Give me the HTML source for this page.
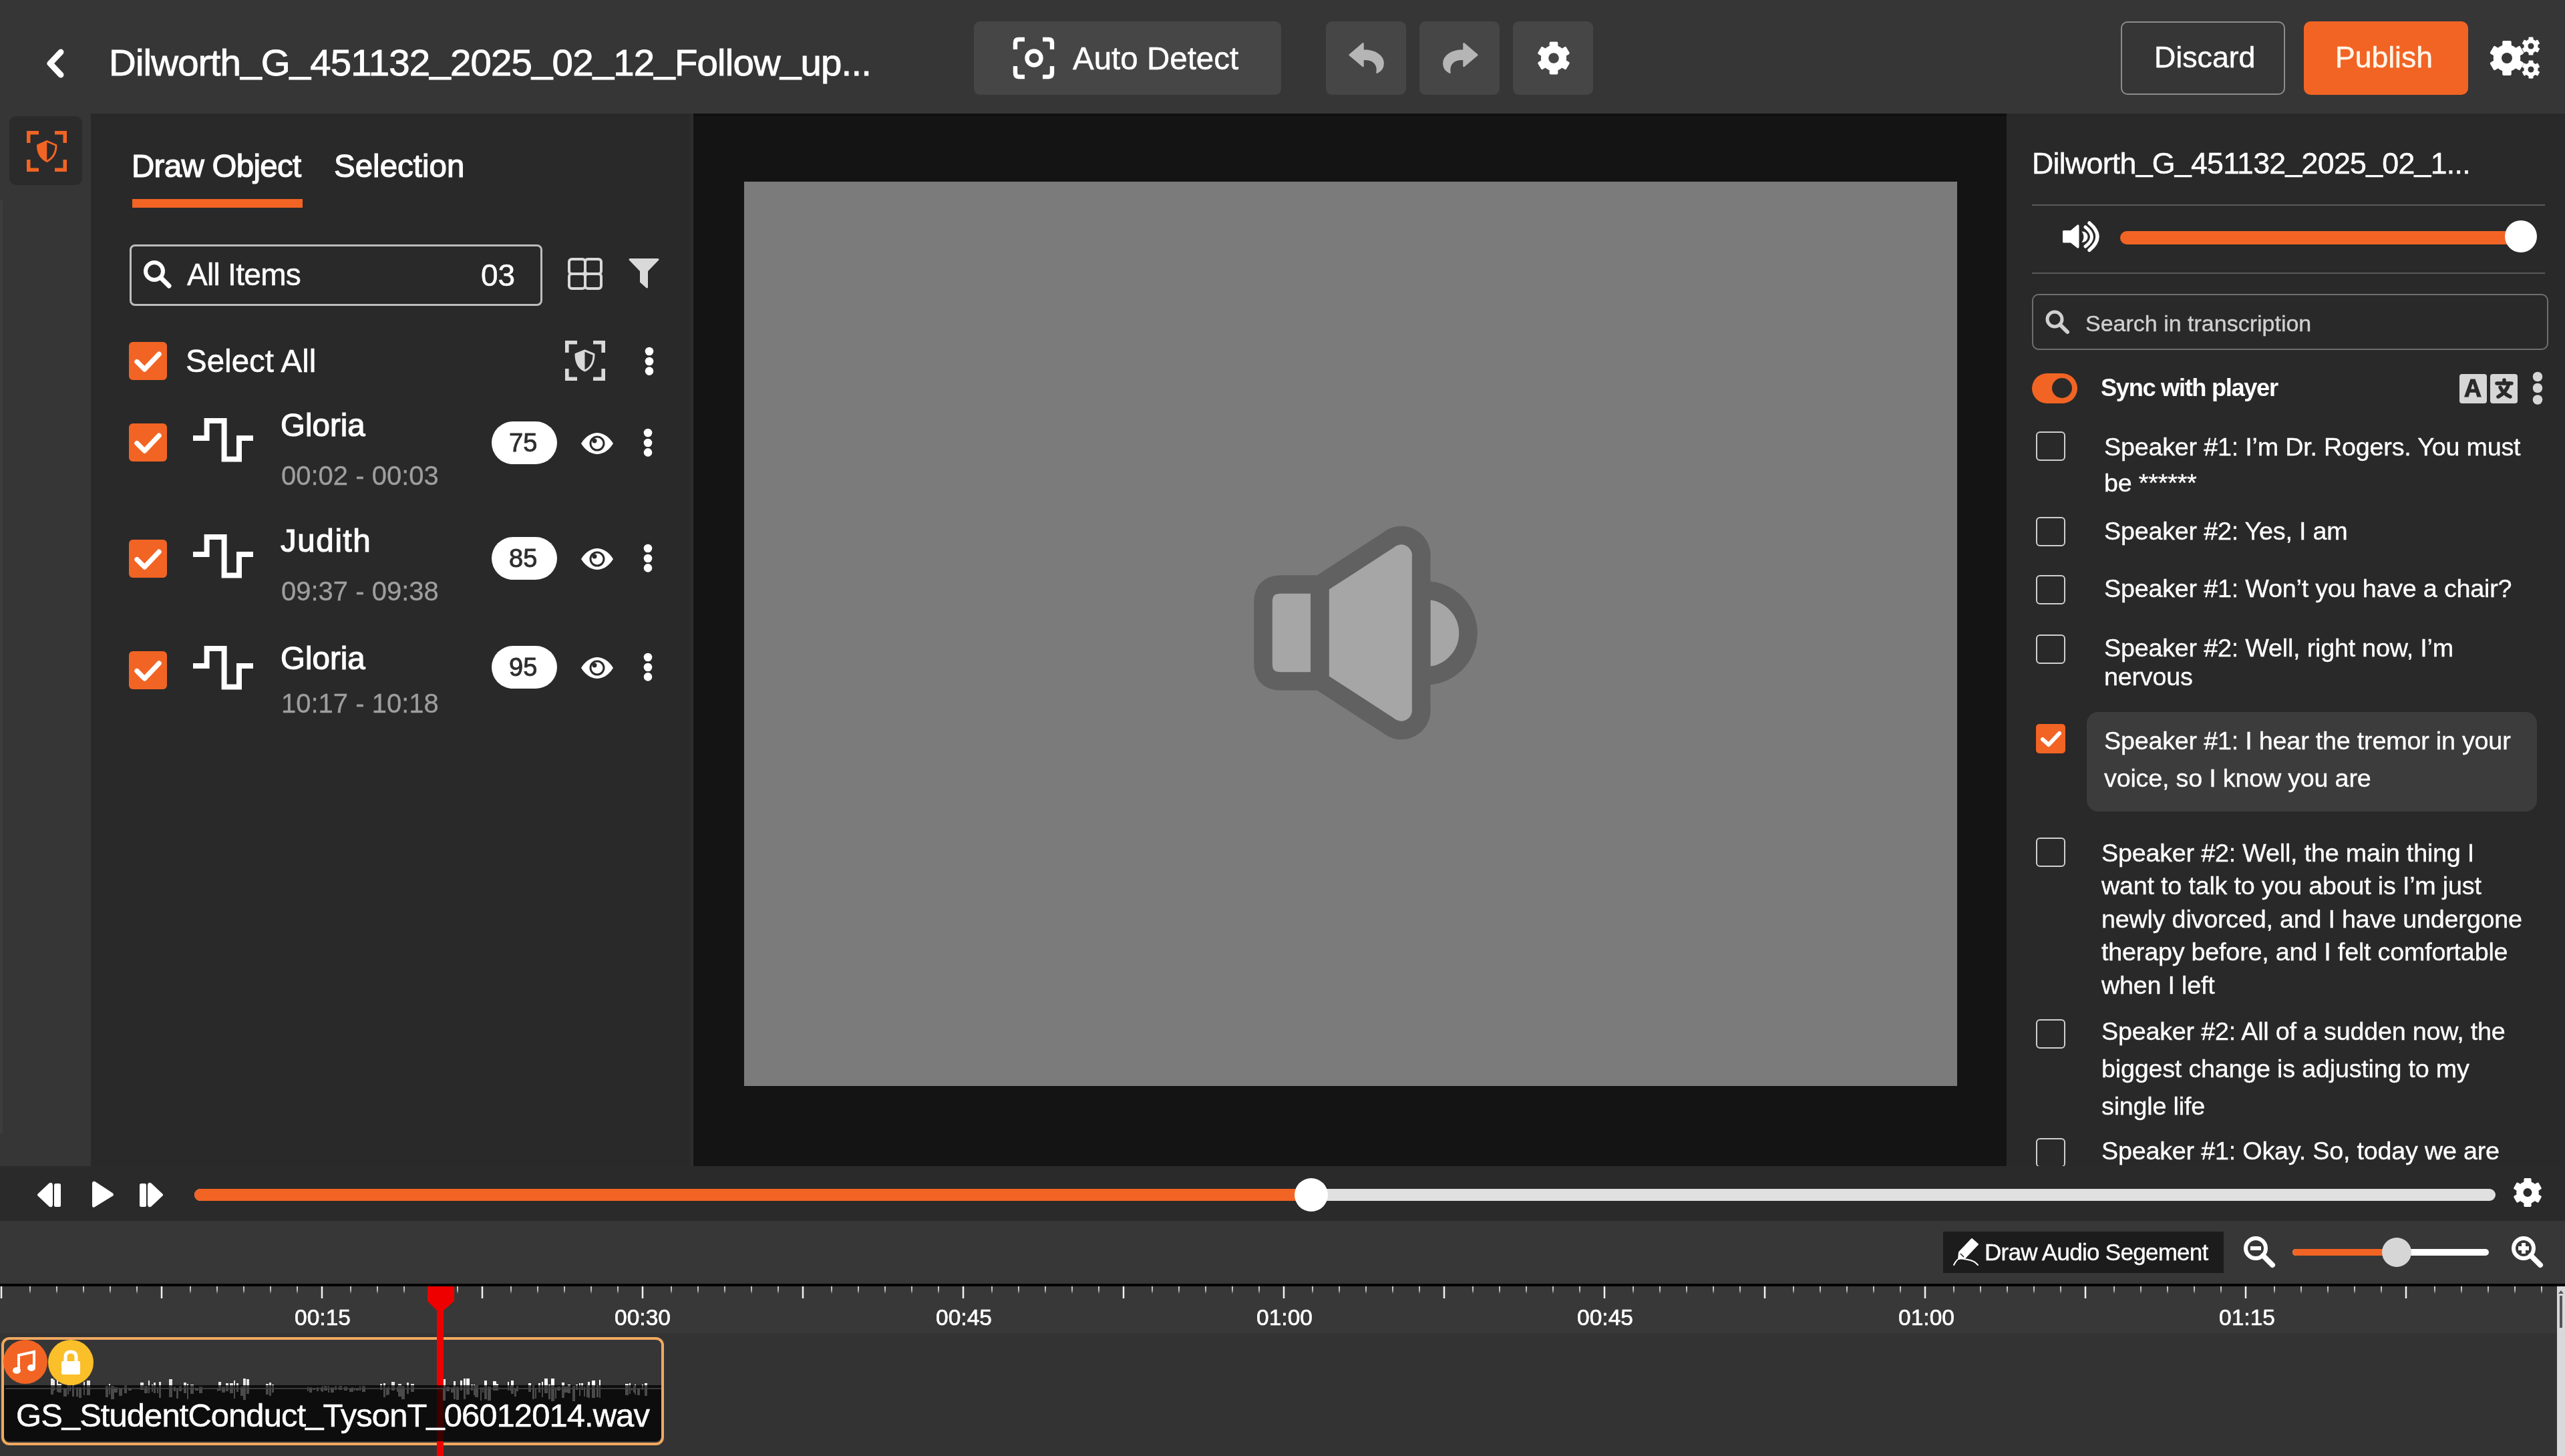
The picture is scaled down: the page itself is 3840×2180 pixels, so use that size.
<!DOCTYPE html>
<html><head><meta charset="utf-8"><title>Editor</title>
<style>
html,body{margin:0;padding:0;}
body{width:3840px;height:2180px;overflow:hidden;position:relative;background:#2a2a2a;font-family:"Liberation Sans",sans-serif;}
.a{position:absolute;}
.t{white-space:nowrap;transform:translateZ(0);}
.u{position:relative;top:-0.1em;}
svg{overflow:visible;}
</style></head><body>
<div class="a" style="left:0px;top:0px;width:3840px;height:170px;background:#363636"></div>
<div class="a" style="left:0px;top:170px;width:136px;height:1576px;background:#363636"></div>
<div class="a" style="left:0px;top:300px;width:4px;height:1397px;background:#3d3d3d"></div>
<div class="a" style="left:136px;top:170px;width:902px;height:1576px;background:#292929"></div>
<div class="a" style="left:1038px;top:170px;width:1966px;height:1576px;background:#141414"></div>
<div class="a" style="left:1033px;top:170px;width:5px;height:1576px;background:#2d2d2d"></div>
<div class="a" style="left:1038px;top:170px;width:1966px;height:4px;background:#101010"></div>
<div class="a" style="left:1114px;top:272px;width:1816px;height:1354px;background:#7b7b7b"></div>
<div class="a" style="left:3004px;top:170px;width:836px;height:1576px;background:#292929"></div>
<div class="a" style="left:0px;top:1746px;width:3840px;height:82px;background:#2a2a2a"></div>
<div class="a" style="left:0px;top:1828px;width:3840px;height:94px;background:#373737"></div>
<div class="a" style="left:0px;top:1922px;width:3840px;height:4px;background:#000"></div>
<div class="a" style="left:0px;top:1926px;width:3840px;height:70px;background:#383838"></div>
<div class="a" style="left:0px;top:1996px;width:3840px;height:184px;background:#333333"></div>
<svg class="a" style="left:60px;top:66px;" width="46" height="58" viewBox="0 0 46 58"><path d="M31 12 L15 29 L31 46" fill="none" stroke="#fff" stroke-width="9" stroke-linecap="round" stroke-linejoin="round"/></svg>
<div class="a t" style="left:163px;top:66.3px;font-size:56.4px;line-height:56.4px;color:#fff;font-weight:400;letter-spacing:-0.82px;-webkit-text-stroke:0.9px #fff;">Dilworth<span class="u">_</span>G<span class="u">_</span>451132<span class="u">_</span>2025<span class="u">_</span>02<span class="u">_</span>12<span class="u">_</span>Follow<span class="u">_</span>up...</div>
<div class="a" style="left:1458px;top:32px;width:460px;height:110px;background:#464646;border-radius:9px"></div>
<svg class="a" style="left:1514px;top:54px;" width="70" height="66" viewBox="0 0 70 66"><g fill="none" stroke="#fff" stroke-width="6.4" stroke-linecap="butt"><path d="M6 20 V10 Q6 5 11 5 H20"/><path d="M47 5 H56 Q61 5 61 10 V20"/><path d="M6 45 V55 Q6 61 11 61 H20"/><path d="M47 61 H56 Q61 61 61 55 V45"/><circle cx="34" cy="33" r="10.5"/></g></svg>
<div class="a t" style="left:1606px;top:63.8px;font-size:47.5px;line-height:47.5px;color:#fff;font-weight:400;-webkit-text-stroke:0.52px #fff;">Auto Detect</div>
<div class="a" style="left:1985px;top:32px;width:120px;height:110px;background:#464646;border-radius:9px"></div>
<div class="a" style="left:2125px;top:32px;width:120px;height:110px;background:#464646;border-radius:9px"></div>
<div class="a" style="left:2265px;top:32px;width:120px;height:110px;background:#464646;border-radius:9px"></div>
<svg class="a" style="left:2018px;top:62px;" width="56" height="50" viewBox="0 0 56 50"><path fill="#b5b5b5" stroke="#b5b5b5" stroke-width="2.5" stroke-linejoin="round" d="M2.7 20.2 L22.5 3.3 V13.6 C42 13.6 52.6 22 52.6 33 C52.6 39 49 44 43.5 46.6 C45.5 36 40 26.8 25 26.8 H22.5 V37 Z"/></svg>
<svg class="a" style="left:2158px;top:62px;" width="56" height="50" viewBox="0 0 56 50"><path fill="#b5b5b5" stroke="#b5b5b5" stroke-width="2.5" stroke-linejoin="round" transform="translate(56,0) scale(-1,1)" d="M2.7 20.2 L22.5 3.3 V13.6 C42 13.6 52.6 22 52.6 33 C52.6 39 49 44 43.5 46.6 C45.5 36 40 26.8 25 26.8 H22.5 V37 Z"/></svg>
<svg class="a" style="left:2295px;top:57px;" width="62" height="62" viewBox="0 0 62 62"><g transform="translate(31,30)"><circle r="19.11" fill="#fff"/><rect x="-6.37" y="-24.50" width="12.74" height="12.25" rx="1.91" fill="#fff" transform="rotate(0.0)"/><rect x="-6.37" y="-24.50" width="12.74" height="12.25" rx="1.91" fill="#fff" transform="rotate(60.0)"/><rect x="-6.37" y="-24.50" width="12.74" height="12.25" rx="1.91" fill="#fff" transform="rotate(120.0)"/><rect x="-6.37" y="-24.50" width="12.74" height="12.25" rx="1.91" fill="#fff" transform="rotate(180.0)"/><rect x="-6.37" y="-24.50" width="12.74" height="12.25" rx="1.91" fill="#fff" transform="rotate(240.0)"/><rect x="-6.37" y="-24.50" width="12.74" height="12.25" rx="1.91" fill="#fff" transform="rotate(300.0)"/><circle r="7.80" fill="#464646"/></g></svg>
<div class="a" style="left:3175px;top:32px;width:246px;height:110px;border:2px solid #8c8c8c;border-radius:10px;box-sizing:border-box"></div>
<div class="a t" style="left:3225px;top:64.2px;font-size:44.7px;line-height:44.7px;color:#fff;font-weight:400;-webkit-text-stroke:0.49px #fff;">Discard</div>
<div class="a" style="left:3449px;top:32px;width:246px;height:110px;background:#f26424;border-radius:10px"></div>
<div class="a t" style="left:3496px;top:64.3px;font-size:44.5px;line-height:44.5px;color:#fff6ea;font-weight:400;-webkit-text-stroke:0.49px #fff6ea;">Publish</div>
<svg class="a" style="left:3722px;top:52px;" width="90" height="70" viewBox="0 0 90 70"><g transform="translate(31,35)"><circle r="20.28" fill="#fff"/><rect x="-6.76" y="-26.00" width="13.52" height="13.00" rx="2.03" fill="#fff" transform="rotate(0.0)"/><rect x="-6.76" y="-26.00" width="13.52" height="13.00" rx="2.03" fill="#fff" transform="rotate(60.0)"/><rect x="-6.76" y="-26.00" width="13.52" height="13.00" rx="2.03" fill="#fff" transform="rotate(120.0)"/><rect x="-6.76" y="-26.00" width="13.52" height="13.00" rx="2.03" fill="#fff" transform="rotate(180.0)"/><rect x="-6.76" y="-26.00" width="13.52" height="13.00" rx="2.03" fill="#fff" transform="rotate(240.0)"/><rect x="-6.76" y="-26.00" width="13.52" height="13.00" rx="2.03" fill="#fff" transform="rotate(300.0)"/><circle r="8.00" fill="#363636"/></g><g transform="translate(67,17)"><circle r="10.53" fill="#fff"/><rect x="-3.51" y="-13.50" width="7.02" height="6.75" rx="1.05" fill="#fff" transform="rotate(0.0)"/><rect x="-3.51" y="-13.50" width="7.02" height="6.75" rx="1.05" fill="#fff" transform="rotate(60.0)"/><rect x="-3.51" y="-13.50" width="7.02" height="6.75" rx="1.05" fill="#fff" transform="rotate(120.0)"/><rect x="-3.51" y="-13.50" width="7.02" height="6.75" rx="1.05" fill="#fff" transform="rotate(180.0)"/><rect x="-3.51" y="-13.50" width="7.02" height="6.75" rx="1.05" fill="#fff" transform="rotate(240.0)"/><rect x="-3.51" y="-13.50" width="7.02" height="6.75" rx="1.05" fill="#fff" transform="rotate(300.0)"/><circle r="4.50" fill="#363636"/></g><g transform="translate(67,52)"><circle r="10.53" fill="#fff"/><rect x="-3.51" y="-13.50" width="7.02" height="6.75" rx="1.05" fill="#fff" transform="rotate(0.0)"/><rect x="-3.51" y="-13.50" width="7.02" height="6.75" rx="1.05" fill="#fff" transform="rotate(60.0)"/><rect x="-3.51" y="-13.50" width="7.02" height="6.75" rx="1.05" fill="#fff" transform="rotate(120.0)"/><rect x="-3.51" y="-13.50" width="7.02" height="6.75" rx="1.05" fill="#fff" transform="rotate(180.0)"/><rect x="-3.51" y="-13.50" width="7.02" height="6.75" rx="1.05" fill="#fff" transform="rotate(240.0)"/><rect x="-3.51" y="-13.50" width="7.02" height="6.75" rx="1.05" fill="#fff" transform="rotate(300.0)"/><circle r="4.50" fill="#363636"/></g></svg>
<div class="a" style="left:14px;top:174px;width:109px;height:103px;background:#2b2b2b;border-radius:10px"></div>
<svg class="a" style="left:40px;top:196px;" width="60" height="61" viewBox="0 0 60 61"><g fill="none" stroke="#f26424" stroke-width="5.5"><path d="M2.75 18 V2.75 H18"/><path d="M42 2.75 H57.25 V18"/><path d="M2.75 43 V58.25 H18"/><path d="M42 58.25 H57.25 V43"/></g><path d="M30.25 15.5 L44 21.5 C44 33 39 41 30.25 45.5 C21.5 41 16.5 33 16.5 21.5 Z" fill="none" stroke="#f26424" stroke-width="3" stroke-linejoin="round"/><path d="M30.25 15.5 L16.5 21.5 C16.5 33 21.5 41 30.25 45.5 Z" fill="#f26424"/></svg>
<div class="a t" style="left:197px;top:224.8px;font-size:47.5px;line-height:47.5px;color:#fff;font-weight:400;letter-spacing:-0.7px;-webkit-text-stroke:1.2px #fff;">Draw Object</div>
<div class="a" style="left:198px;top:298px;width:255px;height:13px;background:#f26424"></div>
<div class="a t" style="left:500px;top:224.8px;font-size:47.5px;line-height:47.5px;color:#fff;font-weight:400;-webkit-text-stroke:1.2px #fff;">Selection</div>
<div class="a" style="left:194px;top:366px;width:618px;height:92px;border:3px solid #bdbdbd;border-radius:8px;box-sizing:border-box"></div>
<svg class="a" style="left:212px;top:387px;" width="50" height="50" viewBox="0 0 50 50"><circle cx="19" cy="19" r="13" fill="none" stroke="#fff" stroke-width="6"/><path d="M29 29 L41 41" stroke="#fff" stroke-width="7" stroke-linecap="round"/></svg>
<div class="a t" style="left:280px;top:388.1px;font-size:46px;line-height:46px;color:#fff;font-weight:400;letter-spacing:-0.7px;-webkit-text-stroke:0.51px #fff;">All Items</div>
<div class="a t" style="left:720px;top:389.1px;font-size:46px;line-height:46px;color:#fff;font-weight:400;-webkit-text-stroke:0.51px #fff;">03</div>
<svg class="a" style="left:848px;top:384px;" width="56" height="52" viewBox="0 0 56 52"><g fill="none" stroke="#d9d9d9" stroke-width="4"><rect x="4" y="4" width="24" height="22" rx="4"/><rect x="28" y="4" width="24" height="22" rx="4"/><rect x="4" y="26" width="24" height="22" rx="4"/><rect x="28" y="26" width="24" height="22" rx="4"/></g></svg>
<svg class="a" style="left:938px;top:385px;" width="52" height="50" viewBox="0 0 52 50"><path d="M5 3.5 H47 L30.5 20.5 V45 L21.5 37 V20.5 Z" fill="#d9d9d9" stroke="#d9d9d9" stroke-width="3" stroke-linejoin="round"/></svg>
<div class="a" style="left:193px;top:512px;width:57px;height:57px;background:#f26424;border-radius:6px"></div>
<svg class="a" style="left:193px;top:512px;" width="57" height="57" viewBox="0 0 57 57"><path d="M12.0 29.6 L23.4 41.0 L45.0 18.2" fill="none" stroke="#fff" stroke-width="7.4" stroke-linecap="round" stroke-linejoin="round"/></svg>
<div class="a t" style="left:278px;top:516.8px;font-size:47.5px;line-height:47.5px;color:#fff;font-weight:400;-webkit-text-stroke:0.52px #fff;">Select All</div>
<svg class="a" style="left:846px;top:510px;" width="60" height="60" viewBox="0 0 60 60"><g fill="none" stroke="#d9d9d9" stroke-width="5.6"><path d="M2.8 18 V2.8 H18"/><path d="M42 2.8 H57.2 V18"/><path d="M2.8 42 V57.2 H18"/><path d="M42 57.2 H57.2 V42"/></g><path d="M29.5 15 L43 20.5 C43 33 38.5 41 29.5 45 C20.5 41 16 33 16 20.5 Z" fill="none" stroke="#d9d9d9" stroke-width="3" stroke-linejoin="round"/><path d="M29.5 15 L16 20.5 C16 33 20.5 41 29.5 45 Z" fill="#d9d9d9"/></svg>
<svg class="a" style="left:961.6px;top:516px;" width="20" height="49.60000000000002" viewBox="0 0 20 49.60000000000002"><circle cx="10" cy="10" r="6.3" fill="#fff"/><circle cx="10" cy="25" r="6.3" fill="#fff"/><circle cx="10" cy="39.60000000000002" r="6.3" fill="#fff"/></svg>
<div class="a" style="left:193px;top:634px;width:57px;height:57px;background:#f26424;border-radius:6px"></div>
<svg class="a" style="left:193px;top:634px;" width="57" height="57" viewBox="0 0 57 57"><path d="M12.0 29.6 L23.4 41.0 L45.0 18.2" fill="none" stroke="#fff" stroke-width="7.4" stroke-linecap="round" stroke-linejoin="round"/></svg>
<svg class="a" style="left:289px;top:625.6px;" width="90" height="66" viewBox="0 0 90 66"><path d="M0 30 H20.6 V4 H46.6 V61.4 H69 V30 H90" fill="none" stroke="#fff" stroke-width="8"/></svg>
<div class="a t" style="left:420px;top:612.8px;font-size:47.5px;line-height:47.5px;color:#fff;font-weight:400;-webkit-text-stroke:1.2px #fff;">Gloria</div>
<div class="a t" style="left:421px;top:691.7px;font-size:40px;line-height:40px;color:#9e9e9e;font-weight:400;-webkit-text-stroke:0.3px #9e9e9e;">00:02 - 00:03</div>
<div class="a" style="left:736px;top:630.6px;width:98px;height:64px;background:#fff;border-radius:32px"></div>
<div class="a t" style="left:762px;top:643.8px;font-size:38px;line-height:38px;color:#2e2e2e;font-weight:400;-webkit-text-stroke:0.9px #2e2e2e;">75</div>
<svg class="a" style="left:868px;top:646.6px;" width="52" height="34" viewBox="0 0 52 34"><path d="M2 17 C10 4 20 1 26 1 C32 1 42 4 50 17 C42 30 32 33 26 33 C20 33 10 30 2 17 Z" fill="#fff"/><circle cx="26" cy="17" r="10" fill="none" stroke="#2a2a2a" stroke-width="3"/><circle cx="22" cy="13" r="3.5" fill="#2a2a2a"/></svg>
<svg class="a" style="left:960px;top:638.0px;" width="20" height="49.39999999999998" viewBox="0 0 20 49.39999999999998"><circle cx="10" cy="10.0" r="6.3" fill="#fff"/><circle cx="10" cy="25.0" r="6.3" fill="#fff"/><circle cx="10" cy="39.39999999999998" r="6.3" fill="#fff"/></svg>
<div class="a" style="left:193px;top:808px;width:57px;height:57px;background:#f26424;border-radius:6px"></div>
<svg class="a" style="left:193px;top:808px;" width="57" height="57" viewBox="0 0 57 57"><path d="M12.0 29.6 L23.4 41.0 L45.0 18.2" fill="none" stroke="#fff" stroke-width="7.4" stroke-linecap="round" stroke-linejoin="round"/></svg>
<svg class="a" style="left:289px;top:799.6px;" width="90" height="66" viewBox="0 0 90 66"><path d="M0 30 H20.6 V4 H46.6 V61.4 H69 V30 H90" fill="none" stroke="#fff" stroke-width="8"/></svg>
<div class="a t" style="left:420px;top:786.2px;font-size:47.5px;line-height:47.5px;color:#fff;font-weight:400;letter-spacing:1.6px;-webkit-text-stroke:1.2px #fff;">Judith</div>
<div class="a t" style="left:421px;top:864.8px;font-size:40px;line-height:40px;color:#9e9e9e;font-weight:400;-webkit-text-stroke:0.3px #9e9e9e;">09:37 - 09:38</div>
<div class="a" style="left:736px;top:804px;width:98px;height:64px;background:#fff;border-radius:32px"></div>
<div class="a t" style="left:762px;top:817.2px;font-size:38px;line-height:38px;color:#2e2e2e;font-weight:400;-webkit-text-stroke:0.9px #2e2e2e;">85</div>
<svg class="a" style="left:868px;top:820px;" width="52" height="34" viewBox="0 0 52 34"><path d="M2 17 C10 4 20 1 26 1 C32 1 42 4 50 17 C42 30 32 33 26 33 C20 33 10 30 2 17 Z" fill="#fff"/><circle cx="26" cy="17" r="10" fill="none" stroke="#2a2a2a" stroke-width="3"/><circle cx="22" cy="13" r="3.5" fill="#2a2a2a"/></svg>
<svg class="a" style="left:960px;top:811.4px;" width="20" height="49.39999999999998" viewBox="0 0 20 49.39999999999998"><circle cx="10" cy="10.0" r="6.3" fill="#fff"/><circle cx="10" cy="25.0" r="6.3" fill="#fff"/><circle cx="10" cy="39.39999999999998" r="6.3" fill="#fff"/></svg>
<div class="a" style="left:193px;top:975px;width:57px;height:57px;background:#f26424;border-radius:6px"></div>
<svg class="a" style="left:193px;top:975px;" width="57" height="57" viewBox="0 0 57 57"><path d="M12.0 29.6 L23.4 41.0 L45.0 18.2" fill="none" stroke="#fff" stroke-width="7.4" stroke-linecap="round" stroke-linejoin="round"/></svg>
<svg class="a" style="left:289px;top:966.6px;" width="90" height="66" viewBox="0 0 90 66"><path d="M0 30 H20.6 V4 H46.6 V61.4 H69 V30 H90" fill="none" stroke="#fff" stroke-width="8"/></svg>
<div class="a t" style="left:420px;top:961.8px;font-size:47.5px;line-height:47.5px;color:#fff;font-weight:400;-webkit-text-stroke:1.2px #fff;">Gloria</div>
<div class="a t" style="left:421px;top:1032.6px;font-size:40px;line-height:40px;color:#9e9e9e;font-weight:400;-webkit-text-stroke:0.3px #9e9e9e;">10:17 - 10:18</div>
<div class="a" style="left:736px;top:967px;width:98px;height:64px;background:#fff;border-radius:32px"></div>
<div class="a t" style="left:762px;top:980.2px;font-size:38px;line-height:38px;color:#2e2e2e;font-weight:400;-webkit-text-stroke:0.9px #2e2e2e;">95</div>
<svg class="a" style="left:868px;top:983px;" width="52" height="34" viewBox="0 0 52 34"><path d="M2 17 C10 4 20 1 26 1 C32 1 42 4 50 17 C42 30 32 33 26 33 C20 33 10 30 2 17 Z" fill="#fff"/><circle cx="26" cy="17" r="10" fill="none" stroke="#2a2a2a" stroke-width="3"/><circle cx="22" cy="13" r="3.5" fill="#2a2a2a"/></svg>
<svg class="a" style="left:960px;top:974.4px;" width="20" height="49.39999999999998" viewBox="0 0 20 49.39999999999998"><circle cx="10" cy="10.0" r="6.3" fill="#fff"/><circle cx="10" cy="25.0" r="6.3" fill="#fff"/><circle cx="10" cy="39.39999999999998" r="6.3" fill="#fff"/></svg>
<svg class="a" style="left:1870px;top:780px;" width="350" height="335" viewBox="0 0 350 335"><g transform="translate(-1870,-780)" stroke="#616161" stroke-width="27.6" stroke-linejoin="round" fill="#a6a6a6"><path d="M2127.6 884 H2134 A64 64 0 0 1 2134 1012 H2127.6 Z"/><path d="M1918 875 H1976 V1020 H1918 Q1891 1020 1891 993 V902 Q1891 875 1918 875 Z"/><path d="M1976 875 L2078 809 A30 30 0 0 1 2127.6 835 V1060 A30 30 0 0 1 2078 1086 L1976 1020 Z"/></g></svg>
<div class="a t" style="left:3042px;top:223.2px;font-size:44.7px;line-height:44.7px;color:#fff;font-weight:400;letter-spacing:-0.72px;-webkit-text-stroke:0.49px #fff;">Dilworth<span class="u">_</span>G<span class="u">_</span>451132<span class="u">_</span>2025<span class="u">_</span>02<span class="u">_</span>1...</div>
<div class="a" style="left:3042px;top:306px;width:768px;height:2px;background:#5a5a5a"></div>
<div class="a" style="left:3042px;top:408px;width:768px;height:2px;background:#5a5a5a"></div>
<svg class="a" style="left:3086px;top:329px;" width="60" height="50" viewBox="0 0 60 50"><path d="M3.5 16 H14 L23.5 8 Q26.5 6 26.5 10 V40 Q26.5 44 23.5 42 L14 34.5 H3.5 Q2 34.5 2 33 V17.5 Q2 16 3.5 16 Z" fill="#fff"/><path d="M30.5 17.5 C36 17.5 39.5 21 39.5 25.5 C39.5 30 36 34 30.5 34 Q33.5 30 33.5 25.5 Q33.5 21 30.5 17.5 Z" fill="#fff"/><g fill="none" stroke="#fff" stroke-linecap="round"><path d="M36 11 Q55 25.5 36 40" stroke-width="5"/><path d="M42 5 Q66 25.25 42 45.5" stroke-width="5.5"/></g></svg>
<div class="a" style="left:3174px;top:346px;width:590px;height:20px;background:#f26424;border-radius:10px"></div>
<div class="a" style="left:3750px;top:330px;width:48px;height:48px;border-radius:50%;background:#fff"></div>
<div class="a" style="left:3042px;top:440px;width:773px;height:84px;border:2px solid #6e6e6e;border-radius:10px;box-sizing:border-box"></div>
<svg class="a" style="left:3060px;top:462px;" width="42" height="42" viewBox="0 0 42 42"><circle cx="16" cy="16" r="11" fill="none" stroke="#d0d0d0" stroke-width="5"/><path d="M24 24 L35 35" stroke="#d0d0d0" stroke-width="6" stroke-linecap="round"/></svg>
<div class="a t" style="left:3122px;top:467.2px;font-size:34px;line-height:34px;color:#d0d0d0;font-weight:400;-webkit-text-stroke:0.37px #d0d0d0;">Search in transcription</div>
<div class="a" style="left:3042px;top:559px;width:68px;height:45px;background:#f26424;border-radius:23px"></div>
<div class="a" style="left:3072px;top:566.4px;width:30px;height:30px;border-radius:50%;background:#2a2a2a"></div>
<div class="a t" style="left:3145px;top:563.3px;font-size:36.3px;line-height:36.3px;color:#fff;font-weight:700;letter-spacing:-1.36px;">Sync with player</div>
<div class="a" style="left:3682px;top:560px;width:41.4px;height:43.7px;background:#d6d6d6;border-radius:4px"></div>
<div class="a" style="left:3727.7px;top:560px;width:41.8px;height:43.7px;background:#d6d6d6;border-radius:4px"></div>
<div class="a t" style="left:3689px;top:563.9px;font-size:36px;line-height:36px;color:#2a2a2a;font-weight:700;-webkit-text-stroke:1.2px #2a2a2a;">A</div>
<svg class="a" style="left:3735px;top:568px;" width="28" height="28" viewBox="0 0 28 28"><g stroke="#2a2a2a" stroke-width="5.5" fill="none" stroke-linecap="round"><path d="M3 6 H25"/><path d="M14 1 V6"/><path d="M21 6 Q17 20 5 26"/><path d="M8 12 Q13 22 23 26"/></g></svg>
<svg class="a" style="left:3789.3px;top:554px;" width="20" height="54.5" viewBox="0 0 20 54.5"><circle cx="10" cy="10" r="7.25" fill="#d6d6d6"/><circle cx="10" cy="27" r="7.25" fill="#d6d6d6"/><circle cx="10" cy="44.5" r="7.25" fill="#d6d6d6"/></svg>
<div class="a" style="left:3124px;top:1066px;width:674px;height:149px;background:#3c3c3c;border-radius:17px"></div>
<div class="a" style="left:3048px;top:646px;width:44px;height:44px;border:2px solid #d0d0d0;border-radius:6px;box-sizing:border-box"></div>
<div class="a t" style="left:3150px;top:650.9px;font-size:37.7px;line-height:37.7px;color:#fff;font-weight:400;letter-spacing:-0.2px;-webkit-text-stroke:0.35px #fff;">Speaker #1: I’m Dr. Rogers. You must</div>
<div class="a t" style="left:3150px;top:705.1px;font-size:37.7px;line-height:37.7px;color:#fff;font-weight:400;letter-spacing:-0.2px;-webkit-text-stroke:0.35px #fff;">be ******</div>
<div class="a" style="left:3048px;top:774px;width:44px;height:44px;border:2px solid #d0d0d0;border-radius:6px;box-sizing:border-box"></div>
<div class="a t" style="left:3150px;top:776.6px;font-size:37.7px;line-height:37.7px;color:#fff;font-weight:400;letter-spacing:-0.2px;-webkit-text-stroke:0.35px #fff;">Speaker #2: Yes, I am</div>
<div class="a" style="left:3048px;top:860.5px;width:44px;height:44px;border:2px solid #d0d0d0;border-radius:6px;box-sizing:border-box"></div>
<div class="a t" style="left:3150px;top:862.5px;font-size:37.7px;line-height:37.7px;color:#fff;font-weight:400;letter-spacing:-0.2px;-webkit-text-stroke:0.35px #fff;">Speaker #1: Won’t you have a chair?</div>
<div class="a" style="left:3048px;top:950px;width:44px;height:44px;border:2px solid #d0d0d0;border-radius:6px;box-sizing:border-box"></div>
<div class="a t" style="left:3150px;top:951.7px;font-size:37.7px;line-height:37.7px;color:#fff;font-weight:400;letter-spacing:-0.2px;-webkit-text-stroke:0.35px #fff;">Speaker #2: Well, right now, I’m</div>
<div class="a t" style="left:3150px;top:994.5px;font-size:37.7px;line-height:37.7px;color:#fff;font-weight:400;letter-spacing:-0.2px;-webkit-text-stroke:0.35px #fff;">nervous</div>
<div class="a" style="left:3048px;top:1084px;width:44px;height:44px;background:#f26424;border-radius:5px"></div>
<svg class="a" style="left:3048px;top:1084px;" width="44" height="44" viewBox="0 0 44 44"><path d="M10 23 L19 31 L35 14" fill="none" stroke="#fff" stroke-width="6" stroke-linecap="round" stroke-linejoin="round"/></svg>
<div class="a t" style="left:3150px;top:1090.8px;font-size:37.7px;line-height:37.7px;color:#fff;font-weight:400;letter-spacing:-0.2px;-webkit-text-stroke:0.35px #fff;">Speaker #1: I hear the tremor in your</div>
<div class="a t" style="left:3150px;top:1147.4px;font-size:37.7px;line-height:37.7px;color:#fff;font-weight:400;letter-spacing:-0.2px;-webkit-text-stroke:0.35px #fff;">voice, so I know you are</div>
<div class="a" style="left:3048px;top:1254px;width:44px;height:44px;border:2px solid #d0d0d0;border-radius:6px;box-sizing:border-box"></div>
<div class="a t" style="left:3146px;top:1258.6px;font-size:37.7px;line-height:37.7px;color:#fff;font-weight:400;letter-spacing:-0.2px;-webkit-text-stroke:0.35px #fff;">Speaker #2: Well, the main thing I</div>
<div class="a t" style="left:3146px;top:1308.2px;font-size:37.7px;line-height:37.7px;color:#fff;font-weight:400;letter-spacing:-0.2px;-webkit-text-stroke:0.35px #fff;">want to talk to you about is I’m just</div>
<div class="a t" style="left:3146px;top:1357.8px;font-size:37.7px;line-height:37.7px;color:#fff;font-weight:400;letter-spacing:-0.2px;-webkit-text-stroke:0.35px #fff;">newly divorced, and I have undergone</div>
<div class="a t" style="left:3146px;top:1407.4px;font-size:37.7px;line-height:37.7px;color:#fff;font-weight:400;letter-spacing:-0.2px;-webkit-text-stroke:0.35px #fff;">therapy before, and I felt comfortable</div>
<div class="a t" style="left:3146px;top:1457.0px;font-size:37.7px;line-height:37.7px;color:#fff;font-weight:400;letter-spacing:-0.2px;-webkit-text-stroke:0.35px #fff;">when I left</div>
<div class="a" style="left:3048px;top:1526.4px;width:44px;height:44px;border:2px solid #d0d0d0;border-radius:6px;box-sizing:border-box"></div>
<div class="a t" style="left:3146px;top:1525.6px;font-size:37.7px;line-height:37.7px;color:#fff;font-weight:400;letter-spacing:-0.2px;-webkit-text-stroke:0.35px #fff;">Speaker #2: All of a sudden now, the</div>
<div class="a t" style="left:3146px;top:1581.6px;font-size:37.7px;line-height:37.7px;color:#fff;font-weight:400;letter-spacing:-0.2px;-webkit-text-stroke:0.35px #fff;">biggest change is adjusting to my</div>
<div class="a t" style="left:3146px;top:1637.6px;font-size:37.7px;line-height:37.7px;color:#fff;font-weight:400;letter-spacing:-0.2px;-webkit-text-stroke:0.35px #fff;">single life</div>
<div class="a" style="left:3048px;top:1704px;width:44px;height:44px;border:2px solid #d0d0d0;border-radius:6px;box-sizing:border-box"></div>
<div class="a t" style="left:3146px;top:1704.8px;font-size:37.7px;line-height:37.7px;color:#fff;font-weight:400;letter-spacing:-0.2px;-webkit-text-stroke:0.35px #fff;">Speaker #1: Okay. So, today we are</div>
<div class="a" style="left:0px;top:1746px;width:3840px;height:82px;background:#2a2a2a"></div>
<svg class="a" style="left:55px;top:1770px;" width="40" height="40" viewBox="0 0 40 40"><path d="M3 19 L20 3 Q22 2 22 5 V33 Q22 36 20 35 Z" fill="#fff" stroke="#fff" stroke-width="4" stroke-linejoin="round"/><rect x="26" y="2" width="10" height="35" rx="2.5" fill="#fff"/></svg>
<svg class="a" style="left:136px;top:1768px;" width="36" height="42" viewBox="0 0 36 42"><path d="M3 4 Q3 1 6 2 L32 19 Q34 21 32 22 L6 38 Q3 40 3 37 Z" fill="#fff" stroke="#fff" stroke-width="2" stroke-linejoin="round"/></svg>
<svg class="a" style="left:205px;top:1770px;" width="40" height="40" viewBox="0 0 40 40"><g transform="translate(40,0) scale(-1,1)"><path d="M3 19 L20 3 Q22 2 22 5 V33 Q22 36 20 35 Z" fill="#fff" stroke="#fff" stroke-width="4" stroke-linejoin="round"/><rect x="26" y="2" width="10" height="35" rx="2.5" fill="#fff"/></g></svg>
<div class="a" style="left:291px;top:1779.5px;width:3445px;height:18.5px;background:#e0e0e0;border-radius:10px"></div>
<div class="a" style="left:291px;top:1779.5px;width:1690px;height:18.5px;background:#f26424;border-radius:10px 0 0 10px"></div>
<div class="a" style="left:1938px;top:1764px;width:50px;height:50px;border-radius:50%;background:#fff"></div>
<svg class="a" style="left:3760px;top:1762px;" width="48" height="48" viewBox="0 0 48 48"><g transform="translate(24,23.5)"><circle r="16.77" fill="#fff"/><rect x="-5.59" y="-21.50" width="11.18" height="10.75" rx="1.68" fill="#fff" transform="rotate(0.0)"/><rect x="-5.59" y="-21.50" width="11.18" height="10.75" rx="1.68" fill="#fff" transform="rotate(60.0)"/><rect x="-5.59" y="-21.50" width="11.18" height="10.75" rx="1.68" fill="#fff" transform="rotate(120.0)"/><rect x="-5.59" y="-21.50" width="11.18" height="10.75" rx="1.68" fill="#fff" transform="rotate(180.0)"/><rect x="-5.59" y="-21.50" width="11.18" height="10.75" rx="1.68" fill="#fff" transform="rotate(240.0)"/><rect x="-5.59" y="-21.50" width="11.18" height="10.75" rx="1.68" fill="#fff" transform="rotate(300.0)"/><circle r="6.50" fill="#2a2a2a"/></g></svg>
<div class="a" style="left:2909px;top:1844px;width:420px;height:62px;background:#1c1c1c"></div>
<svg class="a" style="left:2922px;top:1853px;" width="44" height="46" viewBox="0 0 44 46"><path d="M30 2 L39 10 L20 30 L10 32 L11 22 Z" fill="#fff" stroke="#fff" stroke-width="2" stroke-linejoin="round"/><path d="M13 24 L18 29" stroke="#1c1c1c" stroke-width="1.5"/><path d="M3 41 C6 35 10 31 13 31 C17 32 26 33 31 35 C35 36 37 39 39 41" fill="none" stroke="#fff" stroke-width="2" stroke-linecap="round"/></svg>
<div class="a t" style="left:2971px;top:1857.4px;font-size:35px;line-height:35px;color:#fff;font-weight:400;letter-spacing:-0.72px;-webkit-text-stroke:0.38px #fff;">Draw Audio Segement</div>
<svg class="a" style="left:3358px;top:1850px;" width="52" height="50" viewBox="0 0 52 50"><circle cx="19" cy="19" r="15" fill="none" stroke="#fff" stroke-width="6"/><path d="M11 19 H27" stroke="#fff" stroke-width="6"/><path d="M30 30 L44 44" stroke="#fff" stroke-width="8" stroke-linecap="round"/></svg>
<div class="a" style="left:3432px;top:1870px;width:294px;height:10px;background:#fff;border-radius:5px"></div>
<div class="a" style="left:3432px;top:1870px;width:156px;height:10px;background:#f26424;border-radius:5px 0 0 5px"></div>
<div class="a" style="left:3566px;top:1853px;width:44px;height:44px;border-radius:50%;background:#d6d6d6"></div>
<svg class="a" style="left:3759px;top:1850px;" width="52" height="50" viewBox="0 0 52 50"><circle cx="19" cy="19" r="15" fill="none" stroke="#fff" stroke-width="6"/><path d="M11 19 H27 M19 11 V27" stroke="#fff" stroke-width="6"/><path d="M30 30 L44 44" stroke="#fff" stroke-width="8" stroke-linecap="round"/></svg>
<svg class="a" style="left:0px;top:1926px;" width="3840" height="20" viewBox="0 0 3840 20"><defs><linearGradient id="tg" x1="0" y1="0" x2="0" y2="1"><stop offset="0" stop-color="#e0e0e0"/><stop offset="0.6" stop-color="#c0c0c0"/><stop offset="1" stop-color="#383838"/></linearGradient></defs><rect x="44.1" y="0" width="1.8" height="11" fill="url(#tg)"/><rect x="84.1" y="0" width="1.8" height="11" fill="url(#tg)"/><rect x="124.1" y="0" width="1.8" height="11" fill="url(#tg)"/><rect x="164.1" y="0" width="1.8" height="11" fill="url(#tg)"/><rect x="204.1" y="0" width="1.8" height="11" fill="url(#tg)"/><rect x="284.1" y="0" width="1.8" height="11" fill="url(#tg)"/><rect x="324.1" y="0" width="1.8" height="11" fill="url(#tg)"/><rect x="364.1" y="0" width="1.8" height="11" fill="url(#tg)"/><rect x="404.1" y="0" width="1.8" height="11" fill="url(#tg)"/><rect x="444.1" y="0" width="1.8" height="11" fill="url(#tg)"/><rect x="524.1" y="0" width="1.8" height="11" fill="url(#tg)"/><rect x="564.1" y="0" width="1.8" height="11" fill="url(#tg)"/><rect x="604.1" y="0" width="1.8" height="11" fill="url(#tg)"/><rect x="644.1" y="0" width="1.8" height="11" fill="url(#tg)"/><rect x="684.1" y="0" width="1.8" height="11" fill="url(#tg)"/><rect x="764.1" y="0" width="1.8" height="11" fill="url(#tg)"/><rect x="804.1" y="0" width="1.8" height="11" fill="url(#tg)"/><rect x="844.1" y="0" width="1.8" height="11" fill="url(#tg)"/><rect x="884.1" y="0" width="1.8" height="11" fill="url(#tg)"/><rect x="924.1" y="0" width="1.8" height="11" fill="url(#tg)"/><rect x="1004.1" y="0" width="1.8" height="11" fill="url(#tg)"/><rect x="1044.1" y="0" width="1.8" height="11" fill="url(#tg)"/><rect x="1084.1" y="0" width="1.8" height="11" fill="url(#tg)"/><rect x="1124.1" y="0" width="1.8" height="11" fill="url(#tg)"/><rect x="1164.1" y="0" width="1.8" height="11" fill="url(#tg)"/><rect x="1244.1" y="0" width="1.8" height="11" fill="url(#tg)"/><rect x="1284.1" y="0" width="1.8" height="11" fill="url(#tg)"/><rect x="1324.1" y="0" width="1.8" height="11" fill="url(#tg)"/><rect x="1364.1" y="0" width="1.8" height="11" fill="url(#tg)"/><rect x="1404.1" y="0" width="1.8" height="11" fill="url(#tg)"/><rect x="1484.1" y="0" width="1.8" height="11" fill="url(#tg)"/><rect x="1524.1" y="0" width="1.8" height="11" fill="url(#tg)"/><rect x="1564.1" y="0" width="1.8" height="11" fill="url(#tg)"/><rect x="1604.1" y="0" width="1.8" height="11" fill="url(#tg)"/><rect x="1644.1" y="0" width="1.8" height="11" fill="url(#tg)"/><rect x="1724.1" y="0" width="1.8" height="11" fill="url(#tg)"/><rect x="1764.1" y="0" width="1.8" height="11" fill="url(#tg)"/><rect x="1804.1" y="0" width="1.8" height="11" fill="url(#tg)"/><rect x="1844.1" y="0" width="1.8" height="11" fill="url(#tg)"/><rect x="1884.1" y="0" width="1.8" height="11" fill="url(#tg)"/><rect x="1964.1" y="0" width="1.8" height="11" fill="url(#tg)"/><rect x="2004.1" y="0" width="1.8" height="11" fill="url(#tg)"/><rect x="2044.1" y="0" width="1.8" height="11" fill="url(#tg)"/><rect x="2084.1" y="0" width="1.8" height="11" fill="url(#tg)"/><rect x="2124.1" y="0" width="1.8" height="11" fill="url(#tg)"/><rect x="2204.1" y="0" width="1.8" height="11" fill="url(#tg)"/><rect x="2244.1" y="0" width="1.8" height="11" fill="url(#tg)"/><rect x="2284.1" y="0" width="1.8" height="11" fill="url(#tg)"/><rect x="2324.1" y="0" width="1.8" height="11" fill="url(#tg)"/><rect x="2364.1" y="0" width="1.8" height="11" fill="url(#tg)"/><rect x="2444.1" y="0" width="1.8" height="11" fill="url(#tg)"/><rect x="2484.1" y="0" width="1.8" height="11" fill="url(#tg)"/><rect x="2524.1" y="0" width="1.8" height="11" fill="url(#tg)"/><rect x="2564.1" y="0" width="1.8" height="11" fill="url(#tg)"/><rect x="2604.1" y="0" width="1.8" height="11" fill="url(#tg)"/><rect x="2684.1" y="0" width="1.8" height="11" fill="url(#tg)"/><rect x="2724.1" y="0" width="1.8" height="11" fill="url(#tg)"/><rect x="2764.1" y="0" width="1.8" height="11" fill="url(#tg)"/><rect x="2804.1" y="0" width="1.8" height="11" fill="url(#tg)"/><rect x="2844.1" y="0" width="1.8" height="11" fill="url(#tg)"/><rect x="2924.1" y="0" width="1.8" height="11" fill="url(#tg)"/><rect x="2964.1" y="0" width="1.8" height="11" fill="url(#tg)"/><rect x="3004.1" y="0" width="1.8" height="11" fill="url(#tg)"/><rect x="3044.1" y="0" width="1.8" height="11" fill="url(#tg)"/><rect x="3084.1" y="0" width="1.8" height="11" fill="url(#tg)"/><rect x="3164.1" y="0" width="1.8" height="11" fill="url(#tg)"/><rect x="3204.1" y="0" width="1.8" height="11" fill="url(#tg)"/><rect x="3244.1" y="0" width="1.8" height="11" fill="url(#tg)"/><rect x="3284.1" y="0" width="1.8" height="11" fill="url(#tg)"/><rect x="3324.1" y="0" width="1.8" height="11" fill="url(#tg)"/><rect x="3404.1" y="0" width="1.8" height="11" fill="url(#tg)"/><rect x="3444.1" y="0" width="1.8" height="11" fill="url(#tg)"/><rect x="3484.1" y="0" width="1.8" height="11" fill="url(#tg)"/><rect x="3524.1" y="0" width="1.8" height="11" fill="url(#tg)"/><rect x="3564.1" y="0" width="1.8" height="11" fill="url(#tg)"/><rect x="3644.1" y="0" width="1.8" height="11" fill="url(#tg)"/><rect x="3684.1" y="0" width="1.8" height="11" fill="url(#tg)"/><rect x="3724.1" y="0" width="1.8" height="11" fill="url(#tg)"/><rect x="3764.1" y="0" width="1.8" height="11" fill="url(#tg)"/><rect x="3804.1" y="0" width="1.8" height="11" fill="url(#tg)"/><rect x="0.75" y="0" width="2.5" height="18" fill="#f0f0f0"/><rect x="240.75" y="0" width="2.5" height="18" fill="#f0f0f0"/><rect x="480.75" y="0" width="2.5" height="18" fill="#f0f0f0"/><rect x="720.75" y="0" width="2.5" height="18" fill="#f0f0f0"/><rect x="960.75" y="0" width="2.5" height="18" fill="#f0f0f0"/><rect x="1200.75" y="0" width="2.5" height="18" fill="#f0f0f0"/><rect x="1440.75" y="0" width="2.5" height="18" fill="#f0f0f0"/><rect x="1680.75" y="0" width="2.5" height="18" fill="#f0f0f0"/><rect x="1920.75" y="0" width="2.5" height="18" fill="#f0f0f0"/><rect x="2160.75" y="0" width="2.5" height="18" fill="#f0f0f0"/><rect x="2400.75" y="0" width="2.5" height="18" fill="#f0f0f0"/><rect x="2640.75" y="0" width="2.5" height="18" fill="#f0f0f0"/><rect x="2880.75" y="0" width="2.5" height="18" fill="#f0f0f0"/><rect x="3120.75" y="0" width="2.5" height="18" fill="#f0f0f0"/><rect x="3360.75" y="0" width="2.5" height="18" fill="#f0f0f0"/><rect x="3600.75" y="0" width="2.5" height="18" fill="#f0f0f0"/><rect x="3840.75" y="0" width="2.5" height="18" fill="#f0f0f0"/></svg>
<div class="a t" style="left:383px;width:200px;text-align:center;top:1955.6px;font-size:33.5px;line-height:33.5px;color:#fff;-webkit-text-stroke:0.67px #fff">00:15</div>
<div class="a t" style="left:862px;width:200px;text-align:center;top:1955.6px;font-size:33.5px;line-height:33.5px;color:#fff;-webkit-text-stroke:0.67px #fff">00:30</div>
<div class="a t" style="left:1343px;width:200px;text-align:center;top:1955.6px;font-size:33.5px;line-height:33.5px;color:#fff;-webkit-text-stroke:0.67px #fff">00:45</div>
<div class="a t" style="left:1823px;width:200px;text-align:center;top:1955.6px;font-size:33.5px;line-height:33.5px;color:#fff;-webkit-text-stroke:0.67px #fff">01:00</div>
<div class="a t" style="left:2303px;width:200px;text-align:center;top:1955.6px;font-size:33.5px;line-height:33.5px;color:#fff;-webkit-text-stroke:0.67px #fff">00:45</div>
<div class="a t" style="left:2784px;width:200px;text-align:center;top:1955.6px;font-size:33.5px;line-height:33.5px;color:#fff;-webkit-text-stroke:0.67px #fff">01:00</div>
<div class="a t" style="left:3264px;width:200px;text-align:center;top:1955.6px;font-size:33.5px;line-height:33.5px;color:#fff;-webkit-text-stroke:0.67px #fff">01:15</div>
<div class="a" style="left:2px;top:2002px;width:992px;height:162px;border:4px solid #f0a860;border-radius:12px;box-sizing:border-box;background:#363636"></div>
<svg class="a" style="left:0px;top:2030px;" width="1000" height="80" viewBox="0 0 1000 80"><g transform="translate(0,-2030)"><rect x="76" y="2064" width="4" height="15" fill="#e6e6e6"/><rect x="80" y="2066" width="2" height="13" fill="#e6e6e6"/><rect x="85" y="2065" width="2" height="14" fill="#e6e6e6"/><rect x="87" y="2072" width="5" height="7" fill="#e6e6e6"/><rect x="95" y="2078" width="5" height="1" fill="#e6e6e6"/><rect x="101" y="2070" width="2" height="9" fill="#e6e6e6"/><rect x="104" y="2070" width="2" height="9" fill="#e6e6e6"/><rect x="108" y="2070" width="3" height="9" fill="#e6e6e6"/><rect x="114" y="2077" width="3" height="2" fill="#e6e6e6"/><rect x="118" y="2077" width="4" height="2" fill="#e6e6e6"/><rect x="125" y="2069" width="2" height="10" fill="#e6e6e6"/><rect x="130" y="2067" width="5" height="12" fill="#e6e6e6"/><rect x="158" y="2075" width="4" height="4" fill="#e6e6e6"/><rect x="163" y="2072" width="2" height="7" fill="#e6e6e6"/><rect x="166" y="2075" width="5" height="4" fill="#e6e6e6"/><rect x="171" y="2077" width="5" height="2" fill="#e6e6e6"/><rect x="178" y="2078" width="5" height="1" fill="#e6e6e6"/><rect x="186" y="2074" width="4" height="5" fill="#e6e6e6"/><rect x="192" y="2078" width="5" height="1" fill="#e6e6e6"/><rect x="210" y="2070" width="5" height="9" fill="#e6e6e6"/><rect x="216" y="2075" width="5" height="4" fill="#e6e6e6"/><rect x="222" y="2067" width="2" height="12" fill="#e6e6e6"/><rect x="227" y="2073" width="2" height="6" fill="#e6e6e6"/><rect x="230" y="2070" width="3" height="9" fill="#e6e6e6"/><rect x="235" y="2077" width="2" height="2" fill="#e6e6e6"/><rect x="238" y="2069" width="3" height="10" fill="#e6e6e6"/><rect x="253" y="2065" width="5" height="14" fill="#e6e6e6"/><rect x="260" y="2076" width="3" height="3" fill="#e6e6e6"/><rect x="264" y="2078" width="3" height="1" fill="#e6e6e6"/><rect x="268" y="2075" width="4" height="4" fill="#e6e6e6"/><rect x="275" y="2070" width="4" height="9" fill="#e6e6e6"/><rect x="280" y="2072" width="2" height="7" fill="#e6e6e6"/><rect x="285" y="2073" width="5" height="6" fill="#e6e6e6"/><rect x="292" y="2078" width="5" height="1" fill="#e6e6e6"/><rect x="298" y="2076" width="5" height="3" fill="#e6e6e6"/><rect x="325" y="2078" width="2" height="1" fill="#e6e6e6"/><rect x="327" y="2069" width="4" height="10" fill="#e6e6e6"/><rect x="332" y="2076" width="5" height="3" fill="#e6e6e6"/><rect x="338" y="2071" width="4" height="8" fill="#e6e6e6"/><rect x="344" y="2071" width="5" height="8" fill="#e6e6e6"/><rect x="350" y="2067" width="2" height="12" fill="#e6e6e6"/><rect x="354" y="2071" width="3" height="8" fill="#e6e6e6"/><rect x="360" y="2076" width="4" height="3" fill="#e6e6e6"/><rect x="364" y="2064" width="4" height="15" fill="#e6e6e6"/><rect x="369" y="2065" width="4" height="14" fill="#e6e6e6"/><rect x="398" y="2072" width="4" height="7" fill="#e6e6e6"/><rect x="403" y="2070" width="3" height="9" fill="#e6e6e6"/><rect x="407" y="2073" width="3" height="6" fill="#e6e6e6"/><rect x="460" y="2076" width="2" height="3" fill="#e6e6e6"/><rect x="463" y="2077" width="4" height="2" fill="#e6e6e6"/><rect x="468" y="2078" width="4" height="1" fill="#e6e6e6"/><rect x="474" y="2077" width="3" height="2" fill="#e6e6e6"/><rect x="480" y="2077" width="2" height="2" fill="#e6e6e6"/><rect x="482" y="2075" width="2" height="4" fill="#e6e6e6"/><rect x="485" y="2075" width="5" height="4" fill="#e6e6e6"/><rect x="491" y="2075" width="2" height="4" fill="#e6e6e6"/><rect x="495" y="2077" width="5" height="2" fill="#e6e6e6"/><rect x="501" y="2075" width="3" height="4" fill="#e6e6e6"/><rect x="507" y="2075" width="5" height="4" fill="#e6e6e6"/><rect x="515" y="2076" width="5" height="3" fill="#e6e6e6"/><rect x="523" y="2078" width="3" height="1" fill="#e6e6e6"/><rect x="526" y="2077" width="3" height="2" fill="#e6e6e6"/><rect x="530" y="2078" width="2" height="1" fill="#e6e6e6"/><rect x="533" y="2078" width="4" height="1" fill="#e6e6e6"/><rect x="538" y="2075" width="2" height="4" fill="#e6e6e6"/><rect x="542" y="2075" width="5" height="4" fill="#e6e6e6"/><rect x="569" y="2072" width="3" height="7" fill="#e6e6e6"/><rect x="574" y="2071" width="3" height="8" fill="#e6e6e6"/><rect x="578" y="2077" width="3" height="2" fill="#e6e6e6"/><rect x="581" y="2075" width="2" height="4" fill="#e6e6e6"/><rect x="586" y="2069" width="5" height="10" fill="#e6e6e6"/><rect x="594" y="2076" width="2" height="3" fill="#e6e6e6"/><rect x="596" y="2072" width="5" height="7" fill="#e6e6e6"/><rect x="601" y="2075" width="5" height="4" fill="#e6e6e6"/><rect x="609" y="2070" width="3" height="9" fill="#e6e6e6"/><rect x="615" y="2072" width="5" height="7" fill="#e6e6e6"/><rect x="663" y="2065" width="4" height="14" fill="#ffffff"/><rect x="668" y="2076" width="5" height="3" fill="#ffffff"/><rect x="675" y="2077" width="4" height="2" fill="#ffffff"/><rect x="679" y="2068" width="3" height="11" fill="#ffffff"/><rect x="683" y="2076" width="4" height="3" fill="#ffffff"/><rect x="689" y="2067" width="3" height="12" fill="#ffffff"/><rect x="694" y="2064" width="3" height="15" fill="#ffffff"/><rect x="698" y="2064" width="5" height="15" fill="#ffffff"/><rect x="705" y="2073" width="3" height="6" fill="#ffffff"/><rect x="709" y="2073" width="2" height="6" fill="#ffffff"/><rect x="711" y="2074" width="5" height="5" fill="#ffffff"/><rect x="719" y="2077" width="2" height="2" fill="#ffffff"/><rect x="722" y="2077" width="2" height="2" fill="#ffffff"/><rect x="725" y="2067" width="4" height="12" fill="#ffffff"/><rect x="730" y="2076" width="5" height="3" fill="#ffffff"/><rect x="738" y="2068" width="5" height="11" fill="#ffffff"/><rect x="743" y="2072" width="3" height="7" fill="#ffffff"/><rect x="760" y="2069" width="2" height="10" fill="#ffffff"/><rect x="763" y="2075" width="2" height="4" fill="#ffffff"/><rect x="765" y="2067" width="4" height="12" fill="#ffffff"/><rect x="770" y="2078" width="3" height="1" fill="#ffffff"/><rect x="773" y="2075" width="3" height="4" fill="#ffffff"/><rect x="791" y="2071" width="4" height="8" fill="#ffffff"/><rect x="797" y="2074" width="3" height="5" fill="#ffffff"/><rect x="801" y="2078" width="2" height="1" fill="#ffffff"/><rect x="806" y="2071" width="3" height="8" fill="#ffffff"/><rect x="811" y="2069" width="2" height="10" fill="#ffffff"/><rect x="815" y="2064" width="5" height="15" fill="#ffffff"/><rect x="821" y="2073" width="3" height="6" fill="#ffffff"/><rect x="825" y="2064" width="5" height="15" fill="#ffffff"/><rect x="831" y="2077" width="2" height="2" fill="#ffffff"/><rect x="834" y="2076" width="5" height="3" fill="#ffffff"/><rect x="841" y="2070" width="4" height="9" fill="#ffffff"/><rect x="845" y="2076" width="5" height="3" fill="#ffffff"/><rect x="850" y="2073" width="4" height="6" fill="#ffffff"/><rect x="857" y="2075" width="4" height="4" fill="#ffffff"/><rect x="862" y="2073" width="3" height="6" fill="#ffffff"/><rect x="867" y="2071" width="2" height="8" fill="#ffffff"/><rect x="870" y="2071" width="3" height="8" fill="#ffffff"/><rect x="874" y="2076" width="2" height="3" fill="#ffffff"/><rect x="878" y="2074" width="2" height="5" fill="#ffffff"/><rect x="880" y="2069" width="3" height="10" fill="#ffffff"/><rect x="886" y="2067" width="5" height="12" fill="#ffffff"/><rect x="893" y="2074" width="3" height="5" fill="#ffffff"/><rect x="897" y="2066" width="2" height="13" fill="#ffffff"/><rect x="936" y="2072" width="5" height="7" fill="#ffffff"/><rect x="942" y="2071" width="2" height="8" fill="#ffffff"/><rect x="945" y="2078" width="2" height="1" fill="#ffffff"/><rect x="948" y="2075" width="2" height="4" fill="#ffffff"/><rect x="950" y="2073" width="2" height="6" fill="#ffffff"/><rect x="954" y="2078" width="4" height="1" fill="#ffffff"/><rect x="961" y="2073" width="2" height="6" fill="#ffffff"/><rect x="965" y="2071" width="4" height="8" fill="#ffffff"/></g></svg>
<svg class="a" style="left:638px;top:1926px;" width="44" height="254" viewBox="0 0 44 254"><path d="M2 0 H42 V22 L26 36 V254 H16 V36 L2 22 Z" fill="#ee0000"/></svg>
<div class="a" style="left:6px;top:2074px;width:984px;height:84px;background:rgba(0,0,0,0.75);border-radius:0 0 8px 8px"></div>
<div class="a" style="left:8px;top:2078px;width:982px;height:2px;background:#3a3a3a"></div>
<svg class="a" style="left:0px;top:2030px;" width="1000" height="80" viewBox="0 0 1000 80"><g transform="translate(0,-2030)"><rect x="76" y="2079" width="4" height="9" fill="#4a4a4a"/><rect x="80" y="2079" width="2" height="3" fill="#4a4a4a"/><rect x="85" y="2079" width="2" height="5" fill="#4a4a4a"/><rect x="87" y="2079" width="5" height="6" fill="#4a4a4a"/><rect x="95" y="2079" width="5" height="12" fill="#4a4a4a"/><rect x="101" y="2079" width="2" height="9" fill="#4a4a4a"/><rect x="104" y="2079" width="2" height="4" fill="#4a4a4a"/><rect x="108" y="2079" width="3" height="12" fill="#4a4a4a"/><rect x="114" y="2079" width="3" height="12" fill="#4a4a4a"/><rect x="118" y="2079" width="4" height="14" fill="#4a4a4a"/><rect x="125" y="2079" width="2" height="10" fill="#4a4a4a"/><rect x="130" y="2079" width="5" height="10" fill="#4a4a4a"/><rect x="158" y="2079" width="4" height="13" fill="#4a4a4a"/><rect x="163" y="2079" width="2" height="9" fill="#4a4a4a"/><rect x="166" y="2079" width="5" height="16" fill="#4a4a4a"/><rect x="171" y="2079" width="5" height="6" fill="#4a4a4a"/><rect x="178" y="2079" width="5" height="11" fill="#4a4a4a"/><rect x="186" y="2079" width="4" height="7" fill="#4a4a4a"/><rect x="192" y="2079" width="5" height="3" fill="#4a4a4a"/><rect x="210" y="2079" width="5" height="2" fill="#4a4a4a"/><rect x="216" y="2079" width="5" height="7" fill="#4a4a4a"/><rect x="222" y="2079" width="2" height="7" fill="#4a4a4a"/><rect x="227" y="2079" width="2" height="5" fill="#4a4a4a"/><rect x="230" y="2079" width="3" height="7" fill="#4a4a4a"/><rect x="235" y="2079" width="2" height="7" fill="#4a4a4a"/><rect x="238" y="2079" width="3" height="14" fill="#4a4a4a"/><rect x="253" y="2079" width="5" height="13" fill="#4a4a4a"/><rect x="260" y="2079" width="3" height="4" fill="#4a4a4a"/><rect x="264" y="2079" width="3" height="15" fill="#4a4a4a"/><rect x="268" y="2079" width="4" height="4" fill="#4a4a4a"/><rect x="275" y="2079" width="4" height="7" fill="#4a4a4a"/><rect x="280" y="2079" width="2" height="16" fill="#4a4a4a"/><rect x="285" y="2079" width="5" height="8" fill="#4a4a4a"/><rect x="292" y="2079" width="5" height="3" fill="#4a4a4a"/><rect x="298" y="2079" width="5" height="7" fill="#4a4a4a"/><rect x="325" y="2079" width="2" height="4" fill="#4a4a4a"/><rect x="327" y="2079" width="4" height="3" fill="#4a4a4a"/><rect x="332" y="2079" width="5" height="6" fill="#4a4a4a"/><rect x="338" y="2079" width="4" height="4" fill="#4a4a4a"/><rect x="344" y="2079" width="5" height="7" fill="#4a4a4a"/><rect x="350" y="2079" width="2" height="15" fill="#4a4a4a"/><rect x="354" y="2079" width="3" height="5" fill="#4a4a4a"/><rect x="360" y="2079" width="4" height="11" fill="#4a4a4a"/><rect x="364" y="2079" width="4" height="17" fill="#4a4a4a"/><rect x="369" y="2079" width="4" height="8" fill="#4a4a4a"/><rect x="398" y="2079" width="4" height="9" fill="#4a4a4a"/><rect x="403" y="2079" width="3" height="11" fill="#4a4a4a"/><rect x="407" y="2079" width="3" height="6" fill="#4a4a4a"/><rect x="460" y="2079" width="2" height="4" fill="#4a4a4a"/><rect x="463" y="2079" width="4" height="6" fill="#4a4a4a"/><rect x="468" y="2079" width="4" height="2" fill="#4a4a4a"/><rect x="474" y="2079" width="3" height="4" fill="#4a4a4a"/><rect x="480" y="2079" width="2" height="4" fill="#4a4a4a"/><rect x="482" y="2079" width="2" height="5" fill="#4a4a4a"/><rect x="485" y="2079" width="5" height="3" fill="#4a4a4a"/><rect x="491" y="2079" width="2" height="6" fill="#4a4a4a"/><rect x="495" y="2079" width="5" height="6" fill="#4a4a4a"/><rect x="501" y="2079" width="3" height="2" fill="#4a4a4a"/><rect x="507" y="2079" width="5" height="2" fill="#4a4a4a"/><rect x="515" y="2079" width="5" height="3" fill="#4a4a4a"/><rect x="523" y="2079" width="3" height="5" fill="#4a4a4a"/><rect x="526" y="2079" width="3" height="5" fill="#4a4a4a"/><rect x="530" y="2079" width="2" height="3" fill="#4a4a4a"/><rect x="533" y="2079" width="4" height="3" fill="#4a4a4a"/><rect x="538" y="2079" width="2" height="3" fill="#4a4a4a"/><rect x="542" y="2079" width="5" height="5" fill="#4a4a4a"/><rect x="569" y="2079" width="3" height="2" fill="#4a4a4a"/><rect x="574" y="2079" width="3" height="13" fill="#4a4a4a"/><rect x="578" y="2079" width="3" height="10" fill="#4a4a4a"/><rect x="581" y="2079" width="2" height="9" fill="#4a4a4a"/><rect x="586" y="2079" width="5" height="3" fill="#4a4a4a"/><rect x="594" y="2079" width="2" height="5" fill="#4a4a4a"/><rect x="596" y="2079" width="5" height="12" fill="#4a4a4a"/><rect x="601" y="2079" width="5" height="16" fill="#4a4a4a"/><rect x="609" y="2079" width="3" height="8" fill="#4a4a4a"/><rect x="615" y="2079" width="5" height="5" fill="#4a4a4a"/><rect x="663" y="2079" width="4" height="18" fill="#4a4a4a"/><rect x="668" y="2079" width="5" height="4" fill="#4a4a4a"/><rect x="675" y="2079" width="4" height="6" fill="#4a4a4a"/><rect x="679" y="2079" width="3" height="16" fill="#4a4a4a"/><rect x="683" y="2079" width="4" height="17" fill="#4a4a4a"/><rect x="689" y="2079" width="3" height="3" fill="#4a4a4a"/><rect x="694" y="2079" width="3" height="16" fill="#4a4a4a"/><rect x="698" y="2079" width="5" height="9" fill="#4a4a4a"/><rect x="705" y="2079" width="3" height="3" fill="#4a4a4a"/><rect x="709" y="2079" width="2" height="10" fill="#4a4a4a"/><rect x="711" y="2079" width="5" height="13" fill="#4a4a4a"/><rect x="719" y="2079" width="2" height="18" fill="#4a4a4a"/><rect x="722" y="2079" width="2" height="6" fill="#4a4a4a"/><rect x="725" y="2079" width="4" height="16" fill="#4a4a4a"/><rect x="730" y="2079" width="5" height="18" fill="#4a4a4a"/><rect x="738" y="2079" width="5" height="3" fill="#4a4a4a"/><rect x="743" y="2079" width="3" height="3" fill="#4a4a4a"/><rect x="760" y="2079" width="2" height="3" fill="#4a4a4a"/><rect x="763" y="2079" width="2" height="3" fill="#4a4a4a"/><rect x="765" y="2079" width="4" height="8" fill="#4a4a4a"/><rect x="770" y="2079" width="3" height="12" fill="#4a4a4a"/><rect x="773" y="2079" width="3" height="4" fill="#4a4a4a"/><rect x="791" y="2079" width="4" height="5" fill="#4a4a4a"/><rect x="797" y="2079" width="3" height="16" fill="#4a4a4a"/><rect x="801" y="2079" width="2" height="15" fill="#4a4a4a"/><rect x="806" y="2079" width="3" height="6" fill="#4a4a4a"/><rect x="811" y="2079" width="2" height="13" fill="#4a4a4a"/><rect x="815" y="2079" width="5" height="7" fill="#4a4a4a"/><rect x="821" y="2079" width="3" height="16" fill="#4a4a4a"/><rect x="825" y="2079" width="5" height="19" fill="#4a4a4a"/><rect x="831" y="2079" width="2" height="15" fill="#4a4a4a"/><rect x="834" y="2079" width="5" height="3" fill="#4a4a4a"/><rect x="841" y="2079" width="4" height="14" fill="#4a4a4a"/><rect x="845" y="2079" width="5" height="6" fill="#4a4a4a"/><rect x="850" y="2079" width="4" height="7" fill="#4a4a4a"/><rect x="857" y="2079" width="4" height="19" fill="#4a4a4a"/><rect x="862" y="2079" width="3" height="2" fill="#4a4a4a"/><rect x="867" y="2079" width="2" height="11" fill="#4a4a4a"/><rect x="870" y="2079" width="3" height="2" fill="#4a4a4a"/><rect x="874" y="2079" width="2" height="12" fill="#4a4a4a"/><rect x="878" y="2079" width="2" height="13" fill="#4a4a4a"/><rect x="880" y="2079" width="3" height="14" fill="#4a4a4a"/><rect x="886" y="2079" width="5" height="14" fill="#4a4a4a"/><rect x="893" y="2079" width="3" height="13" fill="#4a4a4a"/><rect x="897" y="2079" width="2" height="14" fill="#4a4a4a"/><rect x="936" y="2079" width="5" height="10" fill="#4a4a4a"/><rect x="942" y="2079" width="2" height="8" fill="#4a4a4a"/><rect x="945" y="2079" width="2" height="3" fill="#4a4a4a"/><rect x="948" y="2079" width="2" height="6" fill="#4a4a4a"/><rect x="950" y="2079" width="2" height="9" fill="#4a4a4a"/><rect x="954" y="2079" width="4" height="10" fill="#4a4a4a"/><rect x="961" y="2079" width="2" height="2" fill="#4a4a4a"/><rect x="965" y="2079" width="4" height="11" fill="#4a4a4a"/></g></svg>
<div class="a t" style="left:24px;top:2094.6px;font-size:48.9px;line-height:48.9px;color:#fff;font-weight:400;letter-spacing:-0.9px;-webkit-text-stroke:0.54px #fff;">GS<span class="u">_</span>StudentConduct<span class="u">_</span>TysonT<span class="u">_</span>06012014.wav</div>
<div class="a" style="left:5px;top:2006px;width:66px;height:66px;border-radius:50%;background:#f26424"></div>
<svg class="a" style="left:18px;top:2021px;" width="40" height="40" viewBox="0 0 40 40"><path d="M10 30 V8 L33 3 V25" fill="none" stroke="#fff" stroke-width="4"/><ellipse cx="7" cy="31" rx="6" ry="5" fill="#fff"/><ellipse cx="29" cy="27" rx="6" ry="5" fill="#fff"/></svg>
<div class="a" style="left:72px;top:2006px;width:68px;height:68px;border-radius:50%;background:#fbbf2a"></div>
<svg class="a" style="left:88px;top:2020px;" width="36" height="40" viewBox="0 0 36 40"><path d="M10 18 V12 Q10 4 18 4 Q26 4 26 12 V18" fill="none" stroke="#fff" stroke-width="5"/><rect x="4" y="18" width="28" height="20" rx="2" fill="#fff"/></svg>
<div class="a" style="left:3828px;top:1926px;width:12px;height:254px;background:#d9d9d9"></div>
<svg class="a" style="left:3829px;top:1929px;" width="10" height="10" viewBox="0 0 10 10"><path d="M1 8 L5 3 L9 8 Z" fill="#555"/></svg>
<div class="a" style="left:3832px;top:1940px;width:4px;height:48px;background:#555"></div>
</body></html>
